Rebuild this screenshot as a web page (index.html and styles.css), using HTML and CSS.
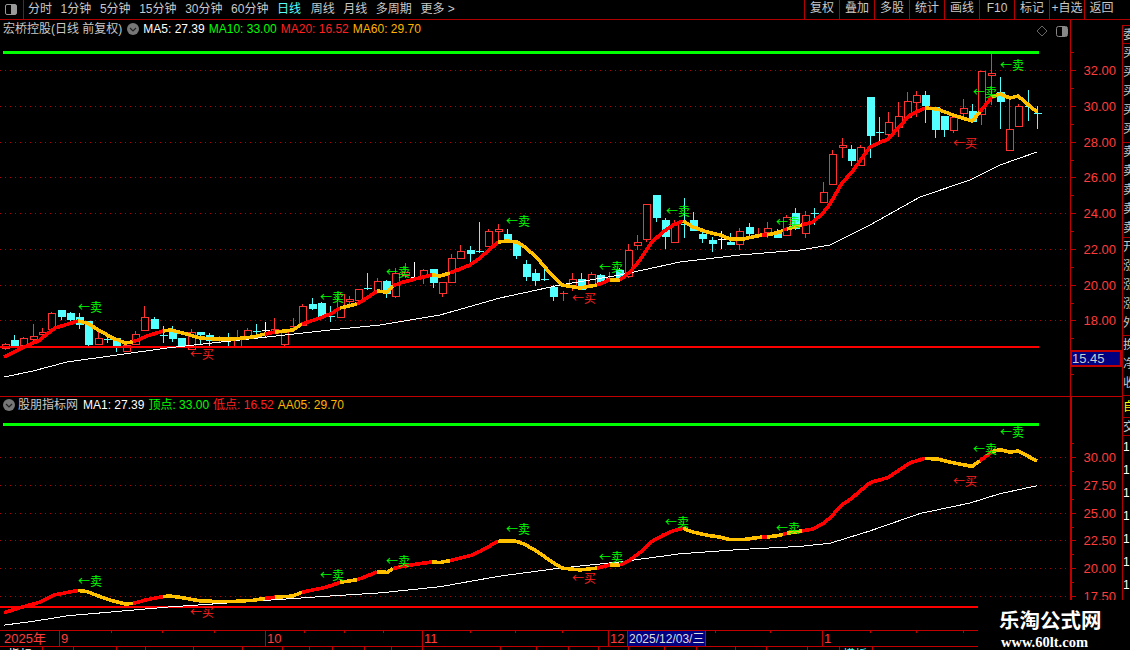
FILE: index.html
```html
<!DOCTYPE html>
<html lang="zh-CN">
<head>
<meta charset="utf-8">
<title>宏桥控股 日线</title>
<link rel="stylesheet" href="styles.css">
</head>
<body>
<div class="app">
  <header class="topbar">
    <div class="toggle"><span class="toggle-icon"></span></div>
    <nav class="periods">
      <span>分时</span><span>1分钟</span><span>5分钟</span><span>15分钟</span><span>30分钟</span><span>60分钟</span><span class="active">日线</span><span>周线</span><span>月线</span><span>多周期</span><span>更多 &gt;</span>
    </nav>
    <nav class="tools">
      <span>复权</span><span>叠加</span><span>多股</span><span>统计</span><span>画线</span><span>F10</span><span>标记</span><span>+自选</span><span class="last">返回</span>
    </nav>
  </header>
  <div class="workspace">
    <main class="charts">
      <section class="pane pane-main">
        <div class="legend">
          <span class="title">宏桥控股(日线 前复权)</span>
          <svg class="chev" viewBox="0 0 12 12"><circle cx="6" cy="6" r="6"/><path d="M3 5l3 3 3-3"/></svg>
          <span class="white">MA5: 27.39</span><span class="green">MA10: 33.00</span><span class="red">MA20: 16.52</span><span class="amber">MA60: 29.70</span>
        </div>
        <svg id="main-chart" class="chart" viewBox="0 20 1122 376"></svg>
      </section>
      <section class="pane pane-sub">
        <div class="legend">
          <svg class="chev" viewBox="0 0 12 12"><circle cx="6" cy="6" r="6"/><path d="M3 5l3 3 3-3"/></svg>
          <span class="title">股朋指标网</span>
          <span class="white">MA1: 27.39</span><span class="green">顶点: 33.00</span><span class="red">低点: 16.52</span><span class="amber">AA05: 29.70</span>
        </div>
        <svg id="sub-chart" class="chart" viewBox="0 397 1122 233"></svg>
      </section>
      <svg id="time-axis" class="timeaxis" viewBox="0 630 1122 20"></svg>
    </main>
    <aside class="side">
      <div class="side-top"></div>
      <div class="side-group g1"><i>委</i></div>
      <div class="side-group g2"><i>买</i><i>买</i><i>买</i><i>买</i><i>买</i></div>
      <div class="side-group g3"><i>卖</i><i>卖</i><i>卖</i><i>卖</i><i>卖</i></div>
      <div class="side-group g4"><i>开</i><i>涨</i><i>涨</i><i>涨</i><i>外</i></div>
      <div class="side-group g5"><i>换</i><i>净</i><i>收</i></div>
      <div class="side-group g6"><i>自</i></div>
      <div class="side-group g7"><i>交</i></div>
      <div class="side-rows"><i>1</i><i>1</i><i>1</i><i>1</i><i>1</i><i>1</i><i>1</i></div>
    </aside>
  </div>
  <div class="watermark">
    <strong>乐淘公式网</strong>
    <em>www.60lt.com</em>
  </div>
</div>
<script src="chart.js"></script>
</body>
</html>
```

FILE: styles.css
```css
* { box-sizing: border-box; }
html, body { margin: 0; height: 100%; background: #000; overflow: hidden; }
body { font: 12px/14px "Liberation Sans", "Noto Sans CJK SC", sans-serif; color: #c8c8c8; }
.app { position: relative; width: 1130px; height: 650px; display: flex; flex-direction: column; }

.topbar { height: 20px; flex: none; display: flex; border-bottom: 1px solid #b00000; }
.toggle { width: 24px; display: flex; align-items: center; justify-content: center; border-right: 1px solid #b00000; padding-right: 1px; }
.toggle-icon { width: 12px; height: 11px; border: 1px solid #999; border-radius: 2px; background: linear-gradient(90deg, #000 50%, #999 50%); }
.periods { display: flex; gap: 8.6px; padding: 2px 0 0 4px; line-height: 15px; }
.periods .active { color: #54ffff; margin-right: 1px; }
.tools { margin-left: auto; display: flex; line-height: 17px; }
.tools span { width: 35px; text-align: center; border-left: 1px solid #b00000; }
.tools .last { width: 46px; padding-right: 12px; }

.workspace { flex: 1; display: flex; min-height: 0; }
.charts { width: 1122px; flex: none; display: flex; flex-direction: column; }
.pane { position: relative; }
.pane-main { height: 377px; border-bottom: 1px solid #c00000; }
.pane-sub { height: 233px; }
.chart, .timeaxis { display: block; width: 1122px; }
.pane-main .chart { height: 376px; }
.pane-sub .chart { height: 233px; }
.timeaxis { height: 20px; }

.legend { position: absolute; left: 3px; top: 2px; display: flex; align-items: center; gap: 4px; white-space: nowrap; height: 14px; z-index: 1; }
.pane-sub .legend { top: 1px; }
.legend .title { margin-right: 1px; }
.pane-sub .chev { margin-right: -1px; }
.chev { width: 12px; height: 12px; flex: none; }
.chev circle { fill: #777; }
.chev path { fill: none; stroke: #222; stroke-width: 1.2; }
.white { color: #fff; }
.green { color: #00ff00; }
.red { color: #ff2020; }
.amber { color: #ffb400; }

.side { flex: 1; overflow: hidden; display: flex; flex-direction: column; }
.side-top { height: 5px; flex: none; }
.side-group, .side-rows { flex: none; border-left: 1px solid #b00000; border-bottom: 1px solid #b00000; overflow: hidden; }
.side i { display: block; font-style: normal; height: 19px; line-height: 19px; width: 12px; color: #c8c8c8; }
.g1 { height: 19px; border-top: 1px solid #b00000; }
.g2 { height: 99px; }
.g3 { height: 95px; }
.g4 { height: 98px; }
.g5 { height: 60px; }
.g6 { height: 22px; }
.g6 i { color: #ffff00; height: 22px; line-height: 22px; }
.g7 { height: 18px; }
.g7 i { height: 18px; line-height: 18px; }
.side-rows { flex: 1; border-bottom: 0; }
.side-rows i { height: 23px; line-height: 23px; color: #fff; }

.watermark { position: absolute; left: 978px; top: 600px; width: 152px; height: 50px; background: #000; display: flex; flex-direction: column; padding: 7px 0 0 21px; }
.watermark strong { font: 700 20.5px/24px "Noto Sans CJK SC", sans-serif; color: #fff; white-space: nowrap; }
.watermark em { font: 700 14.5px/18px "Liberation Serif", serif; color: #fff; padding: 2px 0 0 2px; white-space: nowrap; }

/* svg chart parts */
.chart text, .timeaxis text { font: 12px "Liberation Sans", "Noto Sans CJK SC", sans-serif; }
.grid { stroke: #b00000; stroke-width: 1; stroke-dasharray: 1 4; fill: none; }
.axis { stroke: #c00000; stroke-width: 1; fill: none; shape-rendering: crispEdges; }
.axis-bold { stroke: #c00000; stroke-width: 2; fill: none; shape-rendering: crispEdges; }
.chart .price { fill: #ff3c3c; font-size: 13px; text-anchor: end; }
.wick { fill: none; stroke-width: 1; shape-rendering: crispEdges; }
.body-r { fill: #000; stroke: #ff3232; shape-rendering: crispEdges; }
.body-c { fill: #54ffff; stroke: #54ffff; shape-rendering: crispEdges; }
.w-r { stroke: #ff3232; }
.w-c { stroke: #54ffff; }
.w-w { stroke: #fff; }
.hl-green { stroke: #00ff00; stroke-width: 3; shape-rendering: crispEdges; }
.hl-red { stroke: #ff0000; stroke-width: 2; shape-rendering: crispEdges; }
.ma-white { fill: none; stroke: #fff; stroke-width: 1; shape-rendering: crispEdges; }
.ma-red, .ma-yellow { fill: none; stroke-width: 3.6; shape-rendering: crispEdges; }
.ma-red { stroke: #ff0000; }
.ma-yellow { stroke: #ffc000; }
.chart .sig-sell, .chart .sig-buy { font-family: "Noto Sans CJK SC", sans-serif; }
.sig-sell { fill: #00ff00; }
.sig-buy { fill: #ff2020; }
.last-box { fill: #000080; stroke: #c00000; stroke-width: 2; shape-rendering: crispEdges; }
.chart .last-text { fill: #ccc; font-size: 13px; }
.diamond { fill: none; stroke: #666; }
.mini-box { fill: #000; stroke: #888; }
.mini-fill { fill: #888; }
.timeaxis .time-label { fill: #ff3c3c; font-size: 13px; }
.date-box { fill: #000080; stroke: #c00000; shape-rendering: crispEdges; }
.date-text { fill: #ddd; }
.foot-white { fill: #fff; }
.foot-cyan { fill: #54ffff; }
```

FILE: chart.js
```js
(function () {
  var NS = 'http://www.w3.org/2000/svg';
  function el(parent, name, attrs, text) {
    var n = document.createElementNS(NS, name);
    for (var k in attrs) n.setAttribute(k, attrs[k]);
    if (text != null) n.textContent = text;
    parent.appendChild(n);
    return n;
  }

  // [type, bodyTop, bodyBottom, high, low] in main-pane pixels; index gives x
  var C = [
    ['r',344,348,343,350],['c',340,345,335,346],['r',338,345,337,347],['r',336,339,324,342],
    ['r',332,334,328,338],['r',313,329,312,332],['c',310,316,310,320],['c',313,319,312,322],
    ['c',317,324,313,329],['c',321,344,321,347],['r',338,344,332,345],['c',339,339,335,343],
    ['c',338,346,338,352],['r',345,351,342,352],['r',334,344,331,345],['r',317,330,306,331],
    ['c',319,328,317,329],['c',335,335,326,343],['c',332,338,326,342],['c',338,346,338,348],
    ['r',332,349,329,349],['c',332,334,332,345],['c',335,340,333,346],['r',338,340,336,343],
    ['c',339,339,333,346],['r',339,346,330,346],['r',330,337,328,338],['c',331,331,324,338],
    ['w',330,330,322,337],['r',329,333,318,334],['r',332,344,332,346],['r',326,326,318,331],
    ['r',306,325,304,326],['c',304,308,298,310],['c',303,316,302,316],['c',316,316,306,322],
    ['r',294,317,293,317],['r',299,301,296,306],['r',289,300,289,300],['c',288,288,273,290],
    ['r',281,290,278,290],['c',281,293,280,298],['r',273,296,268,298],['r',272,275,263,278],
    ['w',277,277,262,277],['r',270,276,269,284],['c',269,282,269,288],['r',282,293,282,297],
    ['r',258,282,254,283],['r',251,258,245,258],['c',250,253,246,262],['c',251,251,222,253],
    ['r',231,246,229,247],['r',229,231,224,240],['c',234,239,229,242],['c',242,255,242,259],
    ['c',264,276,260,281],['c',273,280,269,286],['c',279,279,268,281],['c',287,296,285,301],
    ['r',293,293,291,301],['r',279,287,273,291],['c',279,289,273,290],['r',274,284,272,285],
    ['c',275,282,274,285],['r',278,278,272,282],['c',270,277,268,279],['r',250,276,244,278],
    ['r',242,245,235,250],['r',204,239,204,242],['c',195,217,195,222],['c',220,236,218,249],
    ['r',224,242,220,242],['c',224,224,198,238],['c',220,230,212,230],['c',234,238,230,243],
    ['c',240,243,237,252],['w',239,239,231,249],['c',242,244,233,245],['r',231,244,228,250],
    ['c',227,233,223,238],['r',235,236,228,238],['r',228,232,222,238],['c',232,237,229,238],
    ['r',217,235,215,236],['c',213,228,208,230],['r',215,233,211,238],['c',213,213,208,225],
    ['r',192,202,182,202],['r',154,184,150,184],['r',145,147,138,158],['c',149,160,145,166],
    ['r',147,165,145,166],['c',97,135,97,158],['c',132,132,117,143],['r',122,134,112,139],
    ['r',116,127,102,137],['r',101,117,92,120],['r',95,102,91,117],['c',95,105,91,123],
    ['c',107,129,107,138],['c',116,129,116,137],['r',117,130,113,133],['r',108,113,99,120],
    ['c',111,121,104,122],['r',71,114,71,125],['r',73,75,54,105],['c',92,101,77,129],
    ['r',129,150,100,150],['r',106,126,104,126],['c',106,106,90,121],['c',113,113,106,129]
  ];

  var SEGS = [
    ['red', [[4,357],[12,353],[20,349],[40,340],[47,334],[55,328],[65,325],[78,321]]],
    ['yellow', [[78,321],[87,323],[100,331],[113,338],[125,343],[133,342]]],
    ['red', [[133,342],[147,336],[163,331]]],
    ['yellow', [[163,331],[170,330],[183,333],[200,338],[217,339],[233,339],[253,337],[265,334]]],
    ['red', [[265,334],[275,332]]],
    ['yellow', [[275,332],[285,331],[293,330],[302,324]]],
    ['red', [[302,324],[323,317],[332,313],[340,308]]],
    ['yellow', [[340,308],[357,304]]],
    ['red', [[357,304],[367,298],[377,291]]],
    ['yellow', [[377,291],[387,292],[393,286]]],
    ['red', [[393,286],[400,283],[415,279],[432,275]]],
    ['yellow', [[432,275],[440,276],[450,273]]],
    ['red', [[450,273],[470,265],[480,258],[498,242]]],
    ['yellow', [[498,242],[507,241],[517,242],[525,247],[537,258],[550,273],[562,285],[580,288],[597,285]]],
    ['red', [[597,285],[610,280]]],
    ['yellow', [[610,280],[620,280]]],
    ['red', [[620,280],[630,272],[640,260],[652,242],[663,232],[673,225],[683,221]]],
    ['yellow', [[683,221],[693,227],[707,232],[720,235],[730,239],[743,239],[757,236],[762,235]]],
    ['red', [[762,235],[767,235]]],
    ['yellow', [[767,235],[780,232],[783,230]]],
    ['red', [[783,230],[787,229]]],
    ['yellow', [[787,229],[802,225]]],
    ['red', [[802,225],[813,222],[823,213],[830,204],[842,183],[852,172],[870,147],[888,139],[910,115],[925,108]]],
    ['yellow', [[925,108],[937,109],[953,115],[972,121],[980,112]]],
    ['red', [[980,112],[992,97]]],
    ['yellow', [[992,97],[1000,94],[1010,98],[1018,96],[1037,112]]]
  ];

  var WHITE = [[4,377],[33,371],[67,362],[110,356],[167,348],[267,337],[330,330],[380,325],[440,315],[500,298],[560,285],[620,275],[680,262],[740,255],[800,250],[830,245],[870,225],[920,197],[970,180],[1000,165],[1037,152]];

  var SELL = [[78,307],[320,297],[386,272],[506,221],[599,267],[666,211],[776,222],[973,92],[1000,65]];
  var BUY = [[190,354],[572,298],[953,143]];
  var SELL2 = [[78,581],[320,575],[386,561],[506,529],[599,557],[665,522],[776,528],[973,449],[1000,432]];
  var BUY2 = [[190,612],[572,578],[953,481]];

  function toSub(y) { return 457 + (y - 105.76) * 0.6197; }
  function pts(list, map) {
    return list.map(function (p) { return p[0] + ',' + (map ? map(p[1]) : p[1]).toFixed(1); }).join(' ');
  }

  function drawAxis(svg, top, bottom, majors, minors, bold) {
    majors.forEach(function (m) {
      el(svg, 'line', { class: 'grid', x1: 0, x2: 1070, y1: m[1] + 0.5, y2: m[1] + 0.5 });
      el(svg, 'line', { class: 'axis', x1: 1070, x2: 1076, y1: m[1] + 0.5, y2: m[1] + 0.5 });
      el(svg, 'text', { class: 'price', x: 1116, y: m[1] + 5 }, m[0]);
    });
    minors.forEach(function (y) {
      el(svg, 'line', { class: 'axis', x1: 1070, x2: 1074, y1: y + 0.5, y2: y + 0.5 });
    });
    el(svg, 'line', { class: bold ? 'axis-bold' : 'axis', x1: bold ? 1071 : 1070.5, x2: bold ? 1071 : 1070.5, y1: top, y2: bottom });
  }

  function drawSignals(svg, sell, buy) {
    sell.forEach(function (s) { el(svg, 'text', { class: 'sig-sell', x: s[0], y: s[1] + 5 }, '←卖'); });
    buy.forEach(function (s) { el(svg, 'text', { class: 'sig-buy', x: s[0], y: s[1] + 5 }, '←买'); });
  }

  function drawLines(svg, map) {
    el(svg, 'polyline', { class: 'ma-white', points: pts(WHITE, map) });
    SEGS.forEach(function (s) {
      el(svg, 'polyline', { class: 'ma-' + s[0], points: pts(s[1], map) });
    });
  }

  // main pane
  var main = document.getElementById('main-chart');
  var mainMajors = [['32.00',70],['30.00',106],['28.00',142],['26.00',177],['24.00',213],['22.00',249],['20.00',285],['18.00',320]];
  drawAxis(main, 20, 396, mainMajors, [52,88,124,160,195,231,267,303,338,374], false);
  C.forEach(function (c, i) {
    var x = Math.round(4.7 + 9.3 * i) + 0.5;
    var cls = c[0];
    el(main, 'line', { class: 'wick w-' + cls, x1: x, x2: x, y1: c[3], y2: c[4] });
    if (c[1] === c[2]) {
      el(main, 'line', { class: 'wick w-' + cls, x1: x - 4, x2: x + 4, y1: c[1] + 0.5, y2: c[1] + 0.5 });
    } else {
      el(main, 'rect', { class: 'body-' + (cls === 'w' ? 'r' : cls), x: x - 3.5, y: c[1] + 0.5, width: 7, height: c[2] - c[1] });
    }
  });
  el(main, 'line', { class: 'hl-green', x1: 3, x2: 1039, y1: 52, y2: 52 });
  el(main, 'line', { class: 'hl-red', x1: 0, x2: 1039, y1: 347, y2: 347 });
  drawLines(main, null);
  drawSignals(main, SELL, BUY);
  el(main, 'polygon', { class: 'diamond', points: '1042,26 1047,31 1042,36 1037,31' });
  el(main, 'rect', { class: 'mini-box', x: 1056.5, y: 26.5, width: 11, height: 10, rx: 2 });
  el(main, 'rect', { class: 'mini-fill', x: 1062, y: 27, width: 5, height: 9 });
  el(main, 'rect', { class: 'last-box', x: 1071, y: 351, width: 50, height: 15 });
  el(main, 'text', { class: 'last-text', x: 1072, y: 363 }, '15.45');

  // indicator pane
  var sub = document.getElementById('sub-chart');
  var subMajors = [['30.00',457],['27.50',485],['25.00',513],['22.50',540],['20.00',568],['17.50',596]];
  drawAxis(sub, 397, 630, subMajors, [443,471,499,527,554,582,610,624], true);
  el(sub, 'line', { class: 'hl-green', x1: 3, x2: 1039, y1: 424, y2: 424 });
  el(sub, 'line', { class: 'hl-red', x1: 0, x2: 1122, y1: 607, y2: 607 });
  drawLines(sub, toSub);
  drawSignals(sub, SELL2, BUY2);

  // time axis + footer tabs
  var t = document.getElementById('time-axis');
  el(t, 'line', { class: 'axis', x1: 0, x2: 1122, y1: 630.5, y2: 630.5 });
  el(t, 'line', { class: 'axis', x1: 0, x2: 1122, y1: 646.5, y2: 646.5 });
  [111,162,214,304,344,383,470,515,562,715,770,870,916,963].forEach(function (x) {
    el(t, 'line', { class: 'axis', x1: x + 0.5, x2: x + 0.5, y1: 630, y2: 633 });
  });
  [59,265,422,608,822].forEach(function (x) {
    el(t, 'line', { class: 'axis', x1: x + 0.5, x2: x + 0.5, y1: 630, y2: 646 });
  });
  [['2025年',4],['9',61],['10',267],['11',424],['12',610],['1',824]].forEach(function (l) {
    el(t, 'text', { class: 'time-label', x: l[1], y: 643 }, l[0]);
  });
  el(t, 'rect', { class: 'date-box', x: 627.5, y: 630.5, width: 78, height: 16 });
  el(t, 'text', { class: 'date-text', x: 629, y: 643 }, '2025/12/03/三');
  [42,73,116,145,193,242,282,309,332,364,391,422,500,536,568,598,628,664,696,735,766,807,839,872].forEach(function (x) {
    el(t, 'line', { class: 'axis', x1: x + 0.5, x2: x + 0.5, y1: 646, y2: 650 });
  });
  el(t, 'text', { class: 'foot-white', x: 8, y: 659 }, '指标');
  el(t, 'text', { class: 'foot-cyan', x: 843, y: 659 }, '模板');
})();
```
